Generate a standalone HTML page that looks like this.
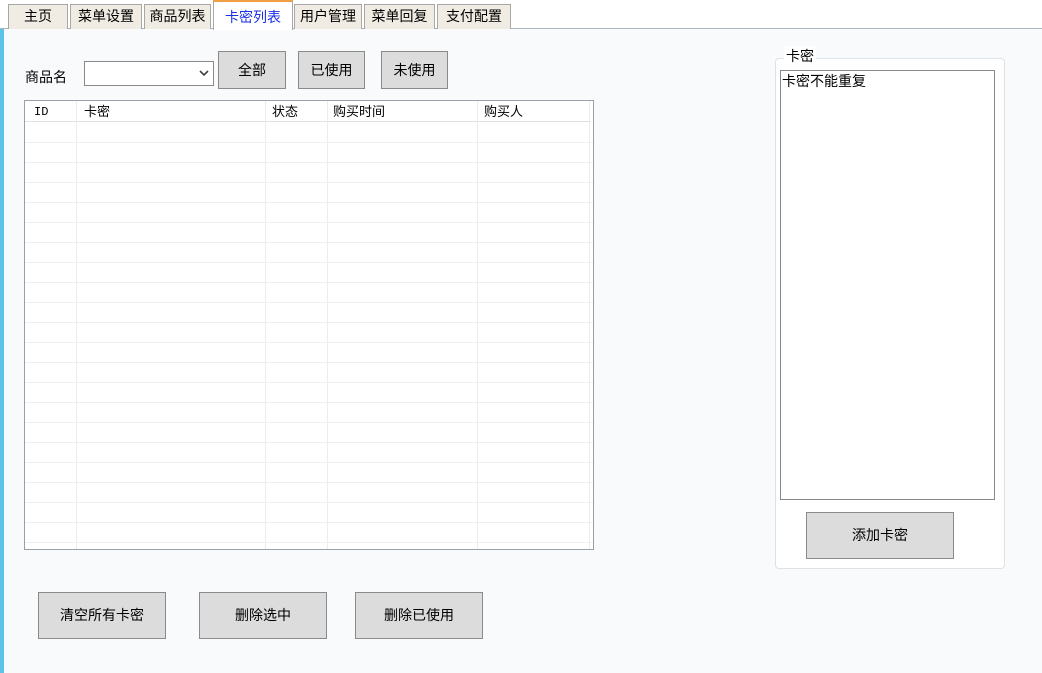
<!DOCTYPE html>
<html><head><meta charset="utf-8"><style>
*{box-sizing:border-box;margin:0;padding:0}
body{width:1042px;height:673px;background:#f9fafc;position:relative;overflow:hidden;font-family:"Liberation Sans","Noto Sans CJK SC",sans-serif;font-size:14px;color:#000}
.a{position:absolute}
.top{left:0;top:0;width:1042px;height:29px;background:#fff;border-bottom:1px solid #a9b4c0}
.tab{position:absolute;top:4px;height:25px;background:#f0ece3;border:1px solid #a8a8a8;border-bottom:none;text-align:center;line-height:23px;font-size:14px}
.act{top:0;height:30px;background:#fff;color:#1a2ee6;border-top:2px solid #f0a040;line-height:30px}
.btn{position:absolute;background:#dcdcdc;border:1px solid #8a8a8a;text-align:center;font-size:14px}
.grid{left:24px;top:100px;width:570px;height:450px;background:#fff;border:1px solid #9aa0a8;overflow:hidden}
.hl{position:absolute;left:0;width:570px;height:1px;background:#f0f0f0}
.vl{position:absolute;top:0;width:1px;height:450px;background:#ececec}
.hd{position:absolute;top:0;font-size:13px;line-height:21px}
</style></head><body>
<div class="a top"></div>
<div class="tab" style="left:8px;width:60px">主页</div>
<div class="tab" style="left:70px;width:72px">菜单设置</div>
<div class="tab" style="left:144px;width:67px">商品列表</div>
<div class="tab act" style="left:213px;width:80px">卡密列表</div>
<div class="tab" style="left:294px;width:68px">用户管理</div>
<div class="tab" style="left:364px;width:71px">菜单回复</div>
<div class="tab" style="left:437px;width:74px">支付配置</div>
<div class="a" style="left:0;top:29px;width:4px;height:644px;background:#5bc3e8"></div>

<div class="a" style="left:25px;top:67px">商品名</div>
<div class="a" style="left:84px;top:61px;width:130px;height:25px;background:#fff;border:1px solid #8a8a8a">
<svg class="a" style="right:4px;top:8px" width="10" height="7" viewBox="0 0 10 7"><path d="M1 1 L5 5 L9 1" fill="none" stroke="#444" stroke-width="1.6"/></svg></div>
<div class="btn" style="left:218px;top:51px;width:68px;height:38px;line-height:36px">全部</div>
<div class="btn" style="left:298px;top:51px;width:67px;height:38px;line-height:36px">已使用</div>
<div class="btn" style="left:381px;top:51px;width:67px;height:38px;line-height:36px">未使用</div>

<div class="a grid">
<div class="a" style="left:0;top:0;width:566px;height:21px;background:#fff;border-bottom:1px solid #e0e0e0"></div>
<div class="vl" style="left:51px"></div><div class="vl" style="left:240px"></div><div class="vl" style="left:302px"></div><div class="vl" style="left:452px"></div><div class="vl" style="left:564px"></div>
<span class="hd" style="left:9px;font-family:'Liberation Mono',monospace;font-size:12px;top:1px">ID</span>
<span class="hd" style="left:59px">卡密</span><span class="hd" style="left:247px">状态</span><span class="hd" style="left:308px">购买时间</span><span class="hd" style="left:459px">购买人</span>
<div class="hl" style="top:41px"></div><div class="hl" style="top:61px"></div><div class="hl" style="top:81px"></div><div class="hl" style="top:101px"></div><div class="hl" style="top:121px"></div><div class="hl" style="top:141px"></div><div class="hl" style="top:161px"></div><div class="hl" style="top:181px"></div><div class="hl" style="top:201px"></div><div class="hl" style="top:221px"></div><div class="hl" style="top:241px"></div><div class="hl" style="top:261px"></div><div class="hl" style="top:281px"></div><div class="hl" style="top:301px"></div><div class="hl" style="top:321px"></div><div class="hl" style="top:341px"></div><div class="hl" style="top:361px"></div><div class="hl" style="top:381px"></div><div class="hl" style="top:401px"></div><div class="hl" style="top:421px"></div><div class="hl" style="top:441px"></div>
</div>

<div class="btn" style="left:38px;top:592px;width:128px;height:47px;line-height:45px">清空所有卡密</div>
<div class="btn" style="left:199px;top:592px;width:128px;height:47px;line-height:45px">删除选中</div>
<div class="btn" style="left:355px;top:592px;width:128px;height:47px;line-height:45px">删除已使用</div>

<div class="a" style="left:775px;top:58px;width:230px;height:511px;background:#fff;border:1px solid #dde2e8;border-radius:4px"></div>
<div class="a" style="left:784px;top:46px;background:#fff;padding:0 2px;font-size:14px;line-height:20px">卡密</div>
<div class="a" style="left:780px;top:70px;width:215px;height:430px;background:#fff;border:1px solid #888;padding:0 1px;line-height:20px">卡密不能重复</div>
<div class="btn" style="left:806px;top:512px;width:148px;height:47px;line-height:45px">添加卡密</div>
</body></html>
